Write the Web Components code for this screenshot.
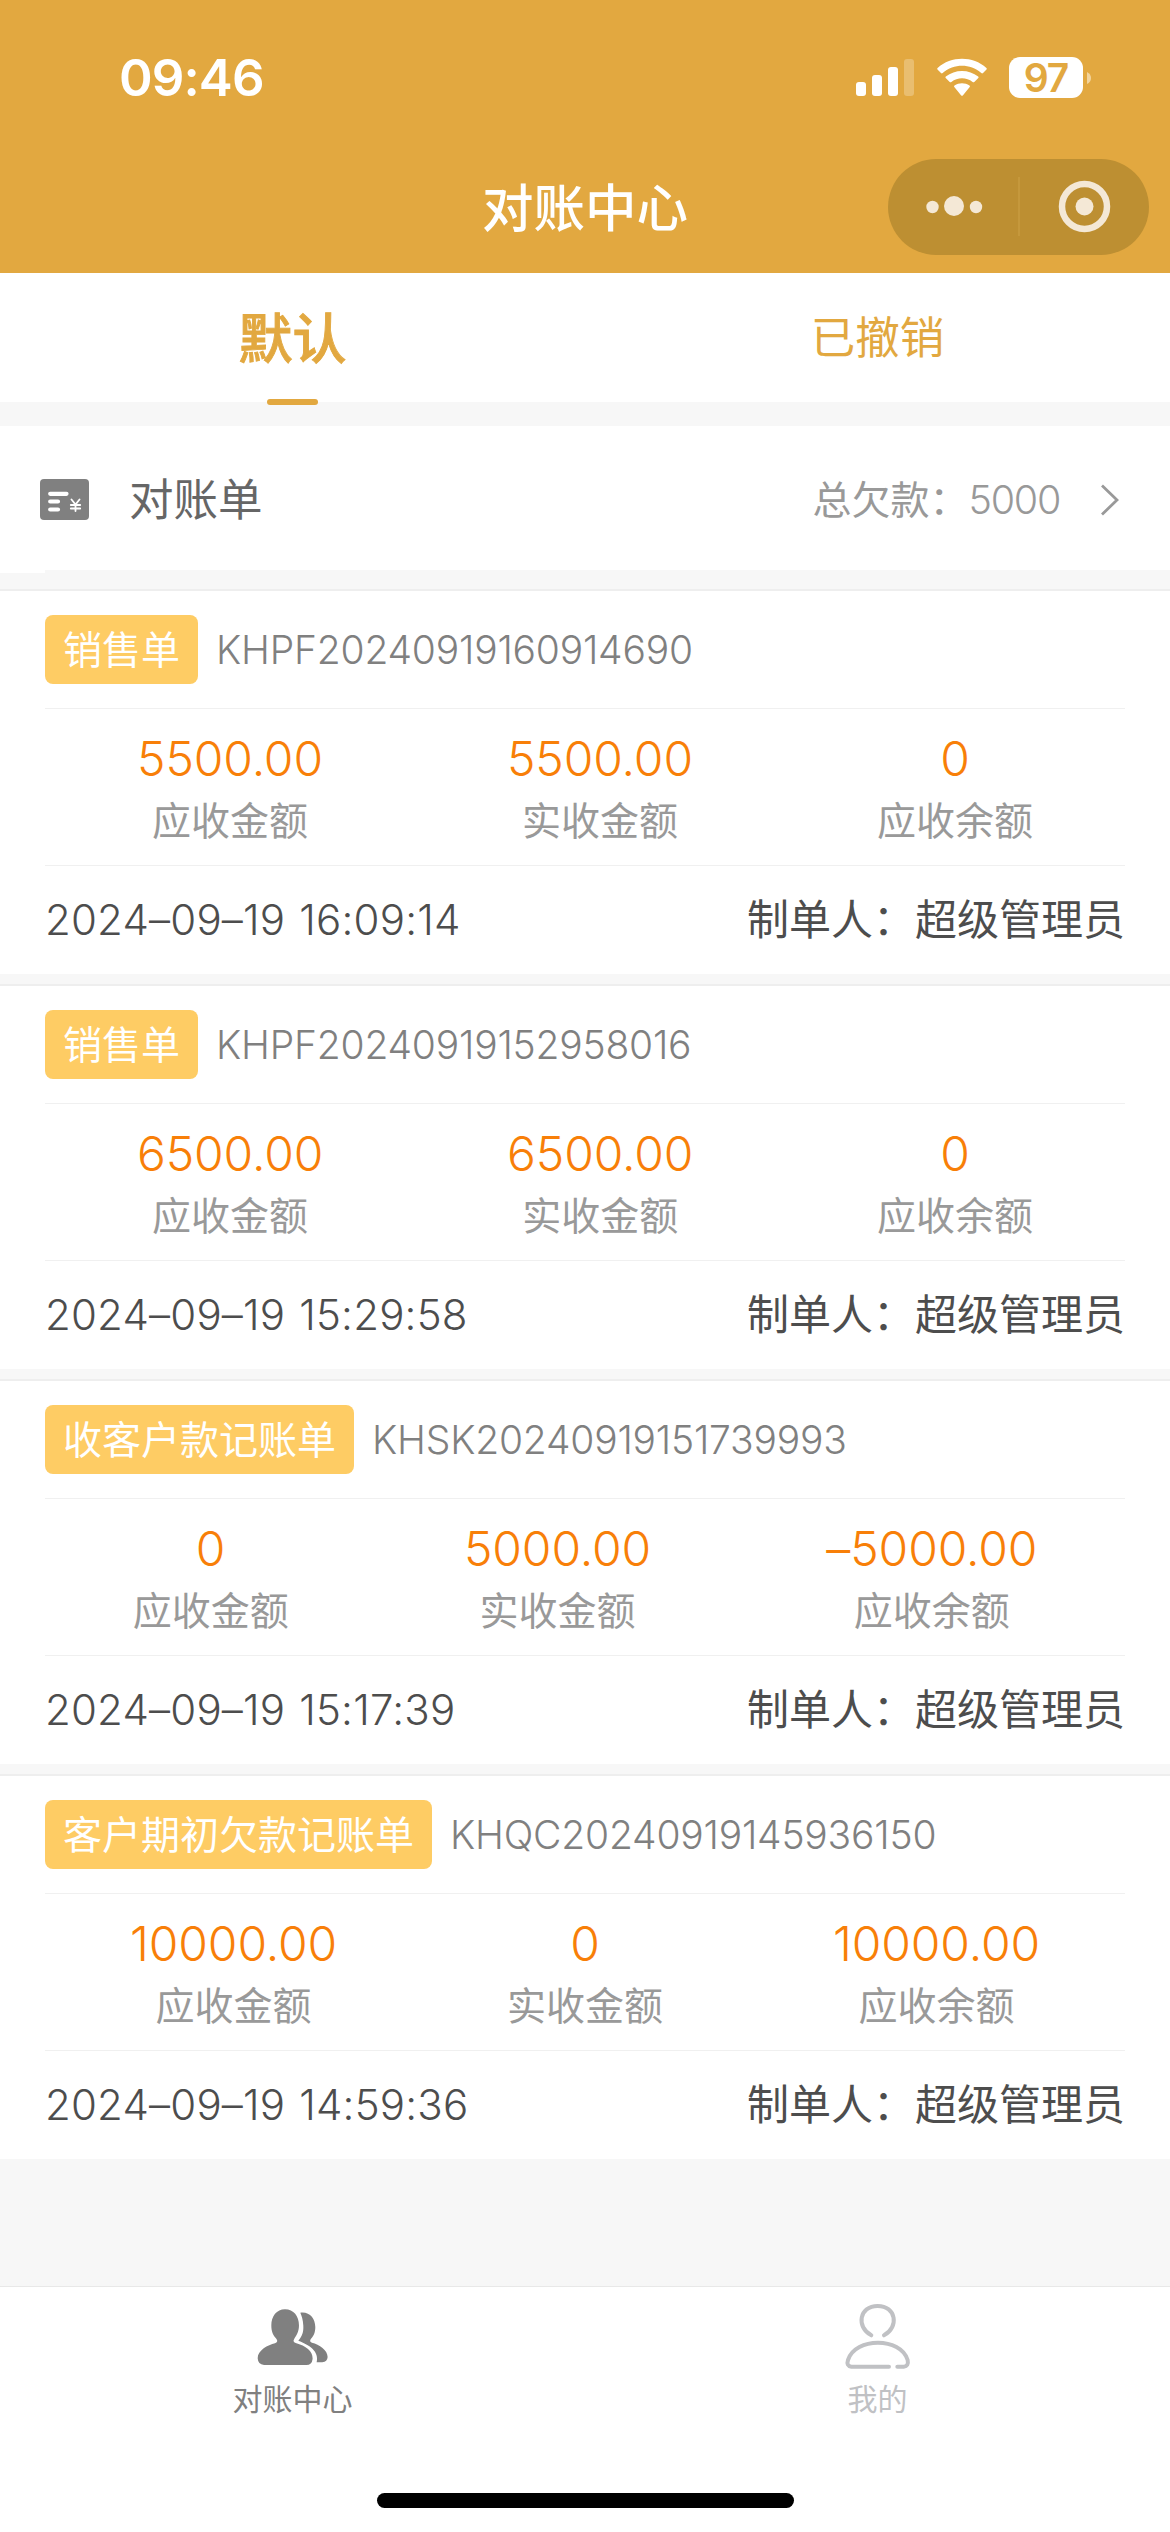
<!DOCTYPE html>
<html lang="zh-CN">
<head>
<meta charset="utf-8">
<title>对账中心</title>
<style>
body{margin:0;background:#f7f7f7;font-family:Inter,"Noto Sans CJK SC",sans-serif;font-weight:400}
</style>
</head>
<body>
<app-screen></app-screen>
<script>
const define = (name, html) => customElements.define(name, class extends HTMLElement {
  constructor() {
    super();
    this.attachShadow({ mode: 'open' }).innerHTML = typeof html === 'function' ? html(this) : html;
  }
});

define('status-bar', `
<style>
:host{display:flex;height:159px;box-sizing:border-box;padding:57px 78px 0 119px;justify-content:space-between;align-items:flex-start;color:#fff}
.time{font-size:51px;line-height:42px;font-weight:600;letter-spacing:-.9px}
.icons{display:flex;height:41px}
.wifi{margin-left:21px}
.batt{margin-left:21px;width:74px;height:41px;border-radius:11px;background:#fff;color:#e2a840;font-size:39px;line-height:41px;font-weight:600;text-align:center;letter-spacing:-1px}
.cap{margin-left:3px}
</style>
<span class="time">09:46</span>
<div class="icons">
<svg width="60" height="41" fill="#fff"><rect x="1" y="25" width="10" height="14" rx="3"/><rect x="17" y="18" width="10" height="21" rx="3"/><rect x="33" y="10" width="10" height="29" rx="3"/><rect x="49" y="2" width="10" height="37" rx="3" opacity=".25"/></svg>
<svg class="wifi" width="52" height="41" viewBox="0 0 52 41" fill="#fff"><path d="M1.5 12.5 Q0.8 11.700 1.600 11 C15-1.300 37-1.300 50.400 11 Q51.200 11.700 50.500 12.500 L47 16 Q46.200 16.800 45.300 16 C34 6.300 18 6.300 6.700 16 Q5.800 16.800 5 16Z"/><path d="M9.700 21 Q9 20.200 9.800 19.500 C19 12 33 12 42.200 19.500 Q43 20.200 42.300 21 L38.300 25 Q37.500 25.700 36.600 25 C30.500 20 21.500 20 15.400 25 Q14.500 25.700 13.700 25Z"/><path d="M18.300 29.900 Q17.600 29.200 18.500 28.500 C23 25.400 29 25.400 33.500 28.500 Q34.400 29.200 33.700 29.900 L27 38.300 Q26 39.400 25 38.300Z"/></svg>
<div class="batt">97</div>
<svg class="cap" width="6" height="41"><path d="M1 15 Q5 17 5 21 T1 27Z" fill="#f2d49c"/></svg>
</div>`);

define('nav-bar', `
<style>
:host{display:grid;grid-template-columns:1fr auto 1fr;height:114px;box-sizing:border-box;padding:0 21px;color:#fff}
h1{margin:0;grid-column:2;font-size:51.500px;line-height:99px;height:96px;font-weight:500}
.capsule{justify-self:end;height:96px;width:261px;border-radius:48px;background:#bd8f32}
svg{display:block}
</style>
<h1><slot></slot></h1>
<div class="capsule"><svg width="261" height="96" fill="#f4e8d6"><circle cx="44.500" cy="48" r="6.200"/><circle cx="66" cy="47" r="10"/><circle cx="88" cy="48" r="6.200"/><path d="M131 18V77" stroke="#c99b41" stroke-width="1.500"/><circle cx="196.500" cy="47.500" r="22.500" fill="none" stroke="#f4e8d6" stroke-width="6.500"/><circle cx="196.500" cy="47.500" r="9"/></svg></div>`);

define('filter-tab', `
<style>
:host{flex:1;display:flex;flex-direction:column;align-items:center;justify-content:space-between;height:132px;color:#e2a840;font-size:44.500px;line-height:130px}
span{height:126px}
:host([active]){font-size:54px;line-height:133px;font-weight:500;-webkit-text-stroke:.9px #e2a840}
i{width:51px;height:6px;border-radius:3px}
:host([active]) i{background:#e2a840}
</style><span><slot></slot></span><i></i>`);

define('filter-tabs', `
<style>:host{display:flex;height:129px;background:#fff}</style><slot></slot>`);

define('summary-cell', el => `
<style>
:host{display:flex;align-items:center;height:147px;margin-top:24px;padding:0 51px 0 40px;background:linear-gradient(#f7f7f7,#f7f7f7) 45px 144px/1125px 3px no-repeat #fff}
.name{margin-left:40px;font-size:44.500px;color:#666;flex:1}
.sum{font-size:39px;color:#999}
.num{font-size:39.500px;font-weight:350;letter-spacing:-1.300px}
.arrow{margin-left:40px}
.name,.sum{line-height:146px}
</style>
<svg width="49" height="41"><rect width="49" height="41" rx="4" fill="#808080"/><g stroke="#fff" fill="none" stroke-linecap="round"><path d="M10.200 14.800H26.500M10.200 22.500H18M10.200 30.500H18" stroke-width="4.200"/><path d="M31.500 20.500L35.500 25.500L39.500 20.500M35.500 25.500V32M30.800 26H40.200M30.800 29.500H40.200" stroke-width="1.800"/></g></svg>
<span class="name">对账单</span>
<span class="sum">总欠款：<span class="num">${el.getAttribute('total')}</span></span>
<svg class="arrow" width="19" height="34" fill="none" stroke="#999" stroke-width="2.800"><path d="M2 2.500L17 17L2 31.500"/></svg>`);

define('amount-item', `
<style>
:host{display:flex;flex-direction:column;align-items:center;font-size:39px;line-height:64px;color:#999}
b{font-size:48px;line-height:61px;font-weight:350;color:#f87f08;letter-spacing:-.1px}
</style><b><slot name="value"></slot></b><slot></slot>`);

define('bill-card', el => {
  const a = n => el.getAttribute(n);
  const item = (v, t) => `<amount-item><span slot="value">${v}</span>${t}</amount-item>`;
  return `
<style>
:host{display:block;height:383px;box-sizing:border-box;padding:0 45px;background:#fff;margin-top:12px;box-shadow:0 -2px 0 #eee}
.head{display:flex;align-items:center;height:118px;box-sizing:border-box;border-bottom:1px solid #f0f0f0;font-size:39px;color:#808080}
.tag{height:69px;line-height:69px;border-radius:8px;background:#fecc64;color:#fff;padding:0 18px;margin-right:18px}
.no{font-weight:350;letter-spacing:-.2px}
.sums{display:flex;justify-content:space-around;height:157px;box-sizing:border-box;padding-top:19px;border-bottom:1px solid #f0f0f0}
.foot{display:flex;justify-content:space-between;height:108px;line-height:108px;font-size:42px;color:#4d4d4d}
.date{font-weight:350;letter-spacing:.2px;word-spacing:2px}
</style>
<div class="head"><span class="tag">${a('type')}</span><span class="no">${a('no')}</span></div>
<div class="sums">${item(a('due'), '应收金额')}${item(a('paid'), '实收金额')}${item(a('rest'), '应收余额')}</div>
<div class="foot"><span class="date">${a('date')}</span><span>制单人：超级管理员</span></div>`;
});

define('tab-item', `
<style>
:host{flex:1;display:flex;flex-direction:column;align-items:center;font-size:30px;line-height:44px;padding-top:16px}
::slotted(svg){display:block;margin-bottom:7px}
</style><slot name="icon"></slot><span><slot></slot></span>`);

define('bottom-bar', `
<style>
:host{display:flex;flex-direction:column;align-items:center;justify-content:space-between;height:246px;box-sizing:border-box;border-top:1px solid #e8e8e8;padding-bottom:24px;background:#fff}
.tabs{display:flex;width:100%}
.home{width:417px;height:15px;border-radius:8px;background:#000}
</style><div class="tabs"><slot></slot></div><div class="home"></div>`);

define('app-screen', `
<style>
:host{display:flex;flex-direction:column;height:2532px;width:1170px;overflow:hidden}
header{background:#e2a840;height:273px}
main{flex:1}
bill-card:first-of-type{margin-top:18px}
</style>
<header><status-bar></status-bar><nav-bar>对账中心</nav-bar></header>
<main>
<filter-tabs><filter-tab active>默认</filter-tab><filter-tab>已撤销</filter-tab></filter-tabs>
<summary-cell total="5000"></summary-cell>
<bill-card type="销售单" no="KHPF20240919160914690" due="5500.00" paid="5500.00" rest="0" date="2024–09–19 16:09:14"></bill-card>
<bill-card type="销售单" no="KHPF20240919152958016" due="6500.00" paid="6500.00" rest="0" date="2024–09–19 15:29:58"></bill-card>
<bill-card type="收客户款记账单" no="KHSK20240919151739993" due="0" paid="5000.00" rest="–5000.00" date="2024–09–19 15:17:39"></bill-card>
<bill-card type="客户期初欠款记账单" no="KHQC20240919145936150" due="10000.00" paid="0" rest="10000.00" date="2024–09–19 14:59:36"></bill-card>
</main>
<bottom-bar>
<tab-item style="color:#808080"><svg slot="icon" width="73.300" height="66.700" viewBox="168 100 220 200" fill="#808080"><path d="M255 119C281 119 297 140 297 167C297 186 290 197 283 207C279 213 280 217 287 220C318 229 338 243 338 267Q336 286 319 286H192Q174 284 173 266C173 242 204 226 225 221C232 218 234 213 229 207C219 197 214 186 214 167C214 140 230 119 255 119Z"/><path d="M301 129C329 125 346 147 346 172C346 189 341 199 333 207C329 213 330 217 336 219C358 224 383 241 383 262Q382 277 367 278H350C358 245 329 226 295 213C307 199 311 186 310 168C309 150 305 138 301 129Z"/></svg>对账中心</tab-item>
<tab-item style="color:#c0c1c4"><svg slot="icon" width="73.300" height="66.700" viewBox="181 100 220 200" fill="none" stroke="#c0c1c4" stroke-width="12" stroke-linecap="round"><path d="M272 197C226 172 235 109 291 109C347 109 356 172 310 197M325 291H212Q196 289 202 271C224 202 360 202 381 271Q385 289 369 291H350"/></svg>我的</tab-item>
</bottom-bar>`);
</script>
</body>
</html>
